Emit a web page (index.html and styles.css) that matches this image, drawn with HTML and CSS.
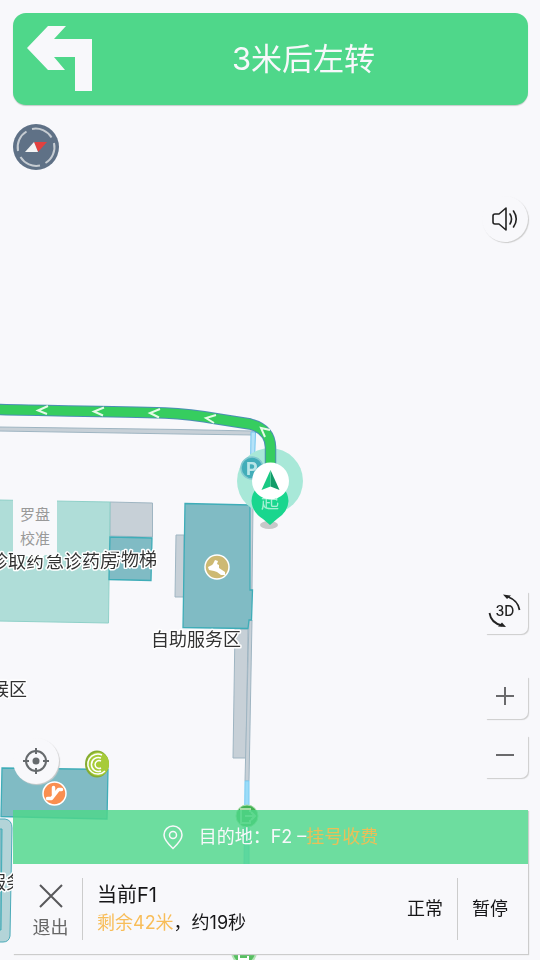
FILE: index.html
```
<!DOCTYPE html>
<html lang="zh-CN">
<head>
    <meta charset="UTF-8">
    <meta name="viewport" content="width=device-width, initial-scale=1.0">
    <title>室内导航</title>
    <link rel="stylesheet" href="styles.css">
</head>
<body>
    <svg class="map" viewBox="0 0 540 960" preserveAspectRatio="xMidYMid slice" aria-hidden="true">
        <!-- corridors -->
        <g fill="#c7d0d7" stroke="#9fb5c2" stroke-width="1">
            <path d="M-2 427L180 429.500L253 431V435L180 434L-2 431Z"/>
            <path d="M110 502L152.500 503V537L110 536Z"/>
            <path d="M176 535H184V597H175Z"/>
            <path d="M235 629H248L246 758H233Z"/>
            <path d="M249 505H253L252 590H249Z"/>
            <path d="M249 620H252L249 781H245Z"/>
        </g>
        <path d="M251 432H255.500L253 505H250Z" fill="#b5e2f8" stroke="#74c6ee"/>
        <path d="M245 781H249V866H244Z" fill="#9bdcf8" stroke="#7accf2"/>
        <!-- rooms -->
        <path d="M-2 500L110 502L108.500 623L-2 621Z" fill="#afddd8" stroke="#8fd0c8"/>
        <g fill="#80bbc4" stroke="#3fadb8" stroke-width="1.300">
            <path d="M110 537L152 538L151 580.500L109 579.500Z"/>
            <path d="M185 503.500L250 505V590H252.500L251.500 620H249L248 628.500L183 627.500Z"/>
            <path d="M2 768L108 769.500L107 819L1 816.500Z"/>
        </g>
        <path d="M-3 819H5Q12 820 12 828L10 936Q9 942 3 942H-3Z" fill="#b3d4d8" stroke="#4aaab8"/>
        <path d="M-2 829H2L1 930H-2" fill="#80bbc4" stroke="#3fadb8"/>
        <!-- escalator, lift and exit marks -->
        <g transform="translate(217 567)">
            <circle r="12" fill="#cdb973" stroke="#fff" stroke-width="1.500"/>
            <path d="M-9 0L-5-2L-4-3L-2-7L1-6L0-3L2-2V1L8 5V8L4 8L0 5L-3 4L-8 3Z" fill="#fff"/>
        </g>
        <g transform="translate(54.500 793.500)">
            <circle r="11.500" fill="#fa8f50" stroke="#fff" stroke-width="1.500"/>
            <path d="M-7 5H-3L4-4H7M-1-6V1" fill="none" stroke="#fff" stroke-width="3.500" stroke-linecap="round" stroke-linejoin="round"/>
        </g>
        <ellipse cx="97" cy="764" rx="12" ry="13.500" fill="#85ac32"/>
        <ellipse cx="98" cy="764" rx="11" ry="12" fill="#a7cb38"/>
        <g fill="none" stroke="#fff" stroke-width="1.500">
            <path d="M102 755A10 10 0 1 0 105 771"/>
            <path d="M101 758A7 7 0 1 0 101 771"/>
            <path d="M101 761A4 4 0 1 0 101 768"/>
        </g>
        <circle cx="247" cy="816" r="11" fill="#43b254" stroke="#a8dda8"/>
        <path d="M250 812V809H241V823H250V820M245 816H255M251 812L255 816L251 820" fill="none" stroke="#a8dda8" stroke-width="2"/>
        <circle cx="244" cy="952" r="12" fill="#58bf62" stroke="#b5e3b7" stroke-width="2"/>
        <path d="M248 949V946H239V959H248V956M243 953H252" fill="none" stroke="#fff" stroke-width="2"/>
        <g class="labels">
            <text x="103" y="566">污物梯</text>
            <text x="-10" y="568">诊取药</text>
            <text x="46" y="568">急诊药房</text>
            <text x="151" y="646">自助服务区</text>
            <text x="-9" y="696">候区</text>
            <text x="-12" y="889">服务</text>
        </g>
        <!-- route -->
        <circle cx="270" cy="481" r="33" fill="#a8e8d8"/>
        <circle cx="252" cy="468" r="11" fill="#42adb9" stroke="#83c9d0" stroke-width="1.500"/>
        <text class="parking" x="246" y="475">P</text>
        <path d="M-4 409.500C50 411 110 411 165 413Q190 414 218 419L250 424Q270 429 270.500 447V470" fill="none" stroke="#4b8eb4" stroke-width="11.500"/>
        <path d="M-4 409.500C50 411 110 411 165 413Q190 414 218 419L250 424Q270 429 270.500 447V470" fill="none" stroke="#36cd5f" stroke-width="9.500"/>
        <g fill="none" stroke="#e6fae8" stroke-width="2">
            <path d="M48 406L38 410.500L47 414"/>
            <path d="M104 407.500L94 411.500L103 415.500"/>
            <path d="M160 409L150 413L159 417.500"/>
            <path d="M216 415L206 418L214 423"/>
            <path d="M270 430L261 428L265 437"/>
        </g>
        <ellipse cx="269" cy="525" rx="9" ry="4" fill="#c7c8c9"/>
        <path d="M251.500 501A18.500 18.500 0 1 1 288.500 501Q288 512 277 519L270 525L263 519Q252 512 251.500 501Z" fill="#19d68e"/>
        <text class="start" x="261" y="508">起</text>
        <circle cx="270.500" cy="481" r="18.500" fill="#fff"/>
        <path d="M270.500 470L279.500 490L270.500 486.500Z" fill="#129c69"/>
        <path d="M270.500 470L261.500 490L270.500 486.500Z" fill="#19c983"/>
    </svg>

    <div class="screen">
        <header class="turn">
            <svg class="turn-icon" viewBox="0 0 66 66" aria-hidden="true">
                <path d="M0 22L21 0H39L27 13H65V65H48V31H27L38 44H21Z" fill="#f8f8fb"/>
            </svg>
            <h1 class="turn-text">3米后左转</h1>
        </header>

        <main class="controls">
            <div class="side">
                <button type="button" class="compass" aria-label="指南针">
                    <svg width="46" height="46" viewBox="0 0 46 46">
                        <circle cx="23" cy="23" r="23" fill="#5f7186"/>
                        <g fill="none" stroke="#c6ccd2" stroke-width="2">
                            <path d="M19 5A18.500 18.500 0 0 1 38.500 13.500"/>
                            <path d="M41 19A18.500 18.500 0 0 1 32.500 39"/>
                            <path d="M27 41.500A18.500 18.500 0 0 1 7.500 33"/>
                            <path d="M5 27A18.500 18.500 0 0 1 13.500 7.500"/>
                        </g>
                        <path d="M21 18H34L25 28Z" fill="#e2413f"/>
                        <path d="M21 18L25 28H12Z" fill="#f3f4f5"/>
                    </svg>
                </button>
                <button type="button" class="calibrate">罗盘<br>校准</button>
                <button type="button" class="round locate" aria-label="定位">
                    <svg width="26" height="26" viewBox="0 0 26 26" fill="none" stroke="#666a6d" stroke-width="2">
                        <circle cx="13" cy="13" r="10"/>
                        <path d="M13 0V6M13 20V26M0 13H6M20 13H26"/>
                        <circle cx="13" cy="13" r="3.500" fill="#666a6d" stroke="none"/>
                    </svg>
                </button>
            </div>
            <div class="side side-right">
                <button type="button" class="round sound" aria-label="语音播报">
                    <svg width="26" height="24" viewBox="0 0 26 24" fill="none" stroke="#222" stroke-width="1.600" stroke-linejoin="round" stroke-linecap="round">
                        <path d="M14 1V23L7 17H3Q1 17 1 15V9Q1 7 3 7H7Z"/>
                        <path d="M18 7Q21 12 18 17M21.500 4Q27 12 21.500 20"/>
                    </svg>
                </button>
                <button type="button" class="square view" aria-label="切换3D视图">
                    <svg width="34" height="34" viewBox="0 0 34 34" fill="none" stroke="#222" stroke-width="1.800">
                        <path d="M19 2.500Q30 6 31.500 16"/>
                        <path d="M15 0.500L23 1.500L19 5Z" fill="#222" stroke="none"/>
                        <path d="M1.500 19Q3 29 14 31.500"/>
                        <path d="M18 33L10 32.500L14 28.500Z" fill="#222" stroke="none"/>
                        <text class="view-text" x="17" y="22">3D</text>
                    </svg>
                </button>
                <button type="button" class="square zoom-in" aria-label="放大">
                    <svg width="18" height="18" viewBox="0 0 18 18"><path d="M9 0V18M0 9H18" stroke="#6a6a6c" stroke-width="2"/></svg>
                </button>
                <button type="button" class="square zoom-out" aria-label="缩小">
                    <svg width="18" height="18" viewBox="0 0 18 18"><path d="M0 9H18" stroke="#6a6a6c" stroke-width="2"/></svg>
                </button>
            </div>
        </main>

        <footer class="panel">
            <div class="destination">
                <svg width="20" height="25" viewBox="0 0 20 25" fill="none" stroke="#f8f8fb" stroke-width="1.500">
                    <path d="M10 23.500Q1 15 1 10A9 9 0 0 1 19 10Q19 15 10 23.500Z"/>
                    <circle cx="10" cy="10" r="3.500"/>
                </svg>
                <div>目的地：F2 –<span class="place">挂号收费</span></div>
            </div>
            <div class="status">
                <button type="button" class="exit">
                    <svg width="24" height="24" viewBox="0 0 24 24"><path d="M1 1L23 23M23 1L1 23" stroke="#58585a" stroke-width="2"/></svg>
                    <span>退出</span>
                </button>
                <div class="info">
                    <div class="floor">当前F1</div>
                    <div class="remain"><span class="distance">剩余42米</span>，约19秒</div>
                </div>
                <button type="button" class="action">正常</button>
                <button type="button" class="action pause">暂停</button>
            </div>
        </footer>
    </div>
</body>
</html>
```
FILE: styles.css
```
* {
    box-sizing: border-box;
}
body {
    margin: 0;
    background-color: #f8f8fb;
    color: #161618;
    font-family: Inter, "Noto Sans CJK SC", sans-serif;
    font-size: 18px;
    line-height: 24px;
}
button {
    margin: 0;
    padding: 0;
    border: none;
    background-color: #f8f8fb;
    color: inherit;
    font: inherit;
    cursor: pointer;
}
svg {
    display: block;
}

/* map behind everything */
.map {
    position: fixed;
    top: 0;
    left: 0;
    width: 100%;
    height: 100%;
}
.labels {
    fill: #333;
    stroke: #fff;
    stroke-width: 3px;
    stroke-linejoin: round;
    paint-order: stroke;
}
.parking {
    fill: #b9e6e8;
    font-size: 18px;
    font-weight: bold;
}
.start {
    fill: #a5f0d3;
}

.screen {
    position: relative;
    display: flex;
    flex-direction: column;
    min-height: 100vh;
    padding: 13px 12px 6px 13px;
}

/* next turn */
.turn {
    display: flex;
    align-items: center;
    padding: 13px 14px;
    border-radius: 13px;
    background-color: #4fd78a;
    box-shadow: 0 1px 1px #c4cbc9;
}
.turn-icon {
    width: 66px;
    height: 66px;
}
.turn-text {
    flex: 1;
    margin: 0;
    color: #f8f8fb;
    font-size: 31px;
    font-weight: 400;
    line-height: 42px;
    text-align: center;
}

/* floating controls */
.controls {
    flex: 1;
    display: flex;
    justify-content: space-between;
}
.side {
    display: flex;
    flex-direction: column;
    align-items: flex-start;
    padding: 19px 0 26px;
}
.side-right {
    align-items: flex-end;
    padding: 91px 0 32px;
}
.compass {
    border-radius: 50%;
    background: none;
}
.calibrate {
    width: 44px;
    height: 56px;
    margin-top: auto;
    margin-bottom: 183px;
    color: #999;
    font-size: 15px;
}
.round,
.square {
    display: flex;
    align-items: center;
    justify-content: center;
}
.round {
    width: 46px;
    height: 46px;
    border-radius: 50%;
    box-shadow: 1px 1px 1px #ccc;
}
.square {
    width: 42px;
    height: 42px;
    padding: 0 4px 4px 0;
    border-radius: 0 0 7px 0;
    box-shadow: 1px 1px 1px #ccc;
}
.view {
    margin-top: auto;
}
.view-text {
    fill: #222;
    stroke: none;
    font-size: 14px;
    font-weight: 500;
    text-anchor: middle;
}
.zoom-in {
    margin-top: 43px;
}
.zoom-out {
    margin-top: 17px;
}

/* bottom panel */
.panel {
    box-shadow: 1px 1px 1px #ccc;
}
.destination {
    display: flex;
    align-items: center;
    justify-content: center;
    gap: 16px;
    height: 54px;
    background-color: rgba(78, 215, 138, 0.82);
    color: #f8f8fb;
}
.place {
    color: #eabf58;
}
.status {
    display: flex;
    align-items: center;
    height: 90px;
    background-color: #f8f8fb;
}
.exit {
    display: flex;
    flex-direction: column;
    align-items: center;
    gap: 8px;
    width: 70px;
    height: 62px;
    padding: 6px 0 0 6px;
    border-right: 1px solid #ccc;
    color: #666;
}
.info {
    flex: 1;
    padding-left: 14px;
}
.floor {
    font-size: 20px;
    line-height: 28px;
}
.remain {
    line-height: 28px;
}
.distance {
    color: #f8bd59;
}
.action {
    height: 62px;
    padding: 0 14px;
}
.pause {
    padding-right: 20px;
    border-left: 1px solid #ccc;
}
```
